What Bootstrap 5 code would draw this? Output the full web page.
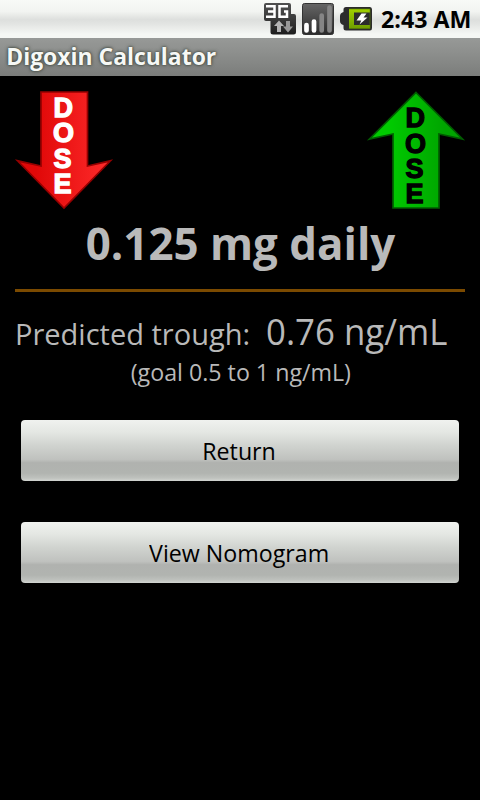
<!DOCTYPE html>
<html lang="en">
<head>
<meta charset="utf-8">
<meta name="viewport" content="width=device-width, initial-scale=1">
<title>Digoxin Calculator</title>
<link href="https://cdn.jsdelivr.net/npm/bootstrap@5.3.0/dist/css/bootstrap.min.css" rel="stylesheet">
<style>
body{background:#000;color:#b9b9b9;font-family:"Open Sans","Noto Sans",sans-serif;height:800px;overflow:hidden}
svg{display:block;flex:none}
.status-strip{height:38px;background:linear-gradient(#f8faf7 0,#f2f4f1 30%,#dddfdd 52%,#e4e6e4 65%,#f5f7f4 90%,#f5f7f4)}
.narrow{display:inline-block;transform:scaleX(.967);transform-origin:center}
.narrow-start{transform:scaleX(.967);transform-origin:left}
.clock{font-size:24px;line-height:38px;color:#000;width:99px;white-space:nowrap}
.title-strip{height:38px;background:linear-gradient(#979997,#8e908e 35%,#7b7d7b);color:#f6f8f5}
.title-text{font-size:24px;line-height:36px;transform:scaleX(.955);transform-origin:left;padding-left:6.5px;text-shadow:0 0 4px #30382f,0 0 2px #50584f}
.dose-row{height:118px}
.dose-text{font-size:45px;line-height:66px;height:60px;padding-left:1px;white-space:nowrap;transform:scaleX(.975)}
.content{padding:19px 15px 0}
.rule-line{height:3px;background:#7b4a00}
.trough{height:46px;margin-top:17px;white-space:nowrap}
.trough-label{font-size:30px;line-height:46px;width:251px}
.trough-value{font-size:36px;line-height:46px}
.goal{font-size:24px;line-height:33px;padding-left:1px;white-space:nowrap}
.button-stack{padding:32px 6px 0;gap:41px}
.btn-droid{height:61px;border-radius:4px;padding:0 1px 0 0;font-size:24px;line-height:61px;color:#000;background:linear-gradient(#f0f2ef 0,#e4e7e3 20%,#d0d3cf 42%,#bfc1be 65%,#b0b2af 70%,#b1b4b0 87%,#bec1bd 95%,#d2d5d1)}
.dose-letters{font:bold 27px "Liberation Sans",Arial,sans-serif;stroke-width:1.3;stroke-linejoin:miter}
</style>
</head>
<body>
<header>
  <div class="status-strip d-flex justify-content-end">
    <svg width="117" height="38" viewBox="264 0 117 38" aria-hidden="true">
      <defs>
        <linearGradient id="dark" x1="0" y1="0" x2="0" y2="1"><stop offset="0" stop-color="#505050"/><stop offset=".5" stop-color="#3a3a3a"/><stop offset="1" stop-color="#1c1c1c"/></linearGradient>
        <linearGradient id="signal" x1="0" y1="0" x2="0" y2="1"><stop offset="0" stop-color="#666"/><stop offset="1" stop-color="#2a2a2a"/></linearGradient>
        <linearGradient id="lime" x1="0" y1="0" x2="0" y2="1"><stop offset="0" stop-color="#a0d000"/><stop offset="1" stop-color="#6f9e00"/></linearGradient>
      </defs>
      <path d="M266 3H289Q291 3 291 5V14H294Q296 14 296 16V32Q296 34.500 293.500 34.500H273Q270.500 34.500 270.500 32V21H266Q264 21 264 19V5Q264 3 266 3Z" fill="url(#dark)"/>
      <path d="M266 6.200H274.500V16.800H266M268 11.500H274.500M288 6.200H279.500V16.800H287V11.500H284" fill="none" stroke="#fff" stroke-width="2.500"/>
      <path d="M279 20.500L284 26H281V32H277V26H274Z" fill="#b4b4b4"/>
      <path d="M288 32.500L283 26.500H286V21H290V26.500H293Z" fill="#999"/>
      <rect x="302.500" y="3.500" width="31" height="31" rx="2" fill="url(#signal)" stroke="#333"/>
      <g stroke-width="4.700" stroke-linecap="round"><path d="M306.500 25V30.500M314 21.500V30.500" stroke="#fff"/><path d="M321.700 15.500V30.500M329.500 7.500V30.500" stroke="#858585"/></g>
      <path d="M346 7H370Q372 7 372 9.500V28Q372 30.500 370 30.500H346Q343.500 30.500 343.500 28V25Q340 24 340 21V16Q340 13 343.500 12V9.500Q343.500 7 346 7Z" fill="#2c2c2c"/>
      <path d="M349 9H370V12.500H354V25H370V28.500H349Z" fill="url(#lime)"/>
      <path d="M349 9H370V28.500H349" fill="none" stroke="#5d8300" stroke-width=".6"/>
      <path d="M361.500 13.500H366.500L363.500 17.500H367.500L359.500 24.500L361.300 20.500H356.500Z" fill="#fff"/>
    </svg>
    <div class="clock fw-bold"><div class="narrow-start">2:43 AM</div></div>
  </div>
  <div class="title-strip"><div class="title-text fw-bold">Digoxin Calculator</div></div>
</header>
<main class="pt-3 d-flex flex-column">
  <div class="dose-row d-flex justify-content-between">
    <svg width="113" height="118" viewBox="0 92 113 118" overflow="visible" role="img" aria-label="Decrease dose">
      <defs><linearGradient id="red"><stop offset=".2" stop-color="#e00808"/><stop offset="1" stop-color="#ff2b2b"/></linearGradient></defs>
      <path d="M41 92H87.500V166L110.500 160.800L64 208L17.500 160.800L41 166Z" fill="url(#red)" stroke="#960000" stroke-width="1.700"/>
      <g class="dose-letters" fill="#fff" stroke="#fff"><text x="53.500" y="116.600">D</text><text x="53" y="142.300">O</text><text x="53.500" y="167.900">S</text><text x="53.500" y="193.300">E</text></g>
    </svg>
    <svg width="113" height="118" viewBox="367 92 113 118" overflow="visible" role="img" aria-label="Increase dose">
      <defs><linearGradient id="green"><stop offset=".2" stop-color="#00cb00"/><stop offset=".8" stop-color="#00a500"/></linearGradient></defs>
      <path d="M416 92.500L462.500 139L439 134V208H393V134L369.500 139Z" fill="url(#green)" stroke="#005c00" stroke-width="1.700"/>
      <g class="dose-letters" fill="#000" stroke="#000"><text x="405.500" y="127">D</text><text x="405" y="152.800">O</text><text x="405.500" y="178.300">S</text><text x="405.500" y="203.300">E</text></g>
    </svg>
  </div>
  <div class="dose-text fw-bold text-center">0.125 mg daily</div>
  <div class="content">
    <div class="rule-line"></div>
    <div class="trough d-flex align-items-baseline"><div class="trough-label"><div class="narrow-start">Predicted trough:</div></div><div class="trough-value narrow-start">0.76 ng/mL</div></div>
    <div class="goal text-center"><span class="narrow">(goal 0.5 to 1 ng/mL)</span></div>
    <div class="button-stack d-flex flex-column">
      <button type="button" class="btn btn-droid border-0 w-100"><span class="narrow">Return</span></button>
      <button type="button" class="btn btn-droid border-0 w-100"><span class="narrow">View Nomogram</span></button>
    </div>
  </div>
</main>
<script src="https://cdn.jsdelivr.net/npm/bootstrap@5.3.0/dist/js/bootstrap.bundle.min.js"></script>
</body>
</html>
